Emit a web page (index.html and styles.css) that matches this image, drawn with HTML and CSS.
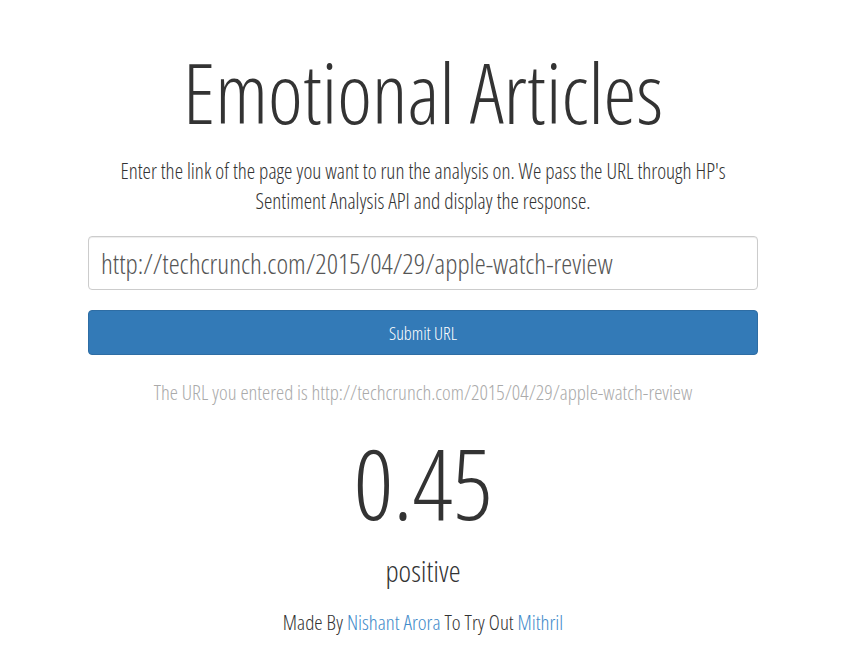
FILE: index.html
```html
<!DOCTYPE html>
<html>
<head>
<meta charset="utf-8">
<link rel="stylesheet" href="styles.css">
</head>
<body>
<main class="page">
  <h1 class="title">Emotional Articles</h1>
  <p class="lead">Enter the link of the page you want to run the analysis on. We pass the URL through HP's Sentiment Analysis API and display the response.</p>
  <input class="url-input" type="text" value="http://techcrunch.com/2015/04/29/apple-watch-review">
  <button class="submit">Submit URL</button>
  <p class="entered">The URL you entered is http://techcrunch.com/2015/04/29/apple-watch-review</p>
  <div class="score">0.45</div>
  <div class="label">positive</div>
  <p class="footer">Made By <a href="#">Nishant Arora</a> To Try Out <a href="#">Mithril</a></p>
</main>
</body>
</html>
```

FILE: styles.css
```css
html, body {
  margin: 0;
  padding: 0;
  background: #fff;
}
body {
  font-family: "Open Sans", "Liberation Sans", sans-serif;
  font-weight: 300;
  font-stretch: 75%;
  color: #333;
}
.page {
  width: 670px;
  margin-left: 88px;
  display: flex;
  flex-direction: column;
  align-items: center;
  text-align: center;
}
.title {
  margin: 42px 0 0;
  font-size: 83px;
  font-weight: 300;
  line-height: 100px;
}
.lead {
  margin: 14px 0 0;
  font-size: 21.2px;
  line-height: 30px;
  padding: 0 20px;
}
.url-input {
  box-sizing: border-box;
  width: 100%;
  height: 54px;
  margin-top: 20px;
  border: 1px solid #ccc;
  border-radius: 4px;
  padding: 0 12px;
  font-family: inherit;
  font-stretch: 75%;
  font-weight: 300;
  font-size: 27.8px;
  color: #555;
  box-shadow: inset 0 1px 1px rgba(0,0,0,.075);
}
.submit {
  box-sizing: border-box;
  width: 100%;
  height: 45px;
  margin-top: 20px;
  background: #337ab7;
  border: 1px solid #2e6da4;
  border-radius: 4px;
  color: #fff;
  font-family: inherit;
  font-stretch: 75%;
  font-weight: 300;
  font-size: 18px;
}
.entered {
  margin: 23px 0 0;
  font-size: 20.7px;
  line-height: 28px;
  color: #aaa;
}
.score {
  margin-top: 16px;
  font-size: 98px;
  line-height: 120px;
}
.label {
  margin-top: 9px;
  font-size: 30px;
  line-height: 40px;
}
.footer {
  margin: 17px 0 0;
  font-size: 21px;
  line-height: 28px;
}
.footer a {
  color: #428bca;
  text-decoration: none;
}
```
